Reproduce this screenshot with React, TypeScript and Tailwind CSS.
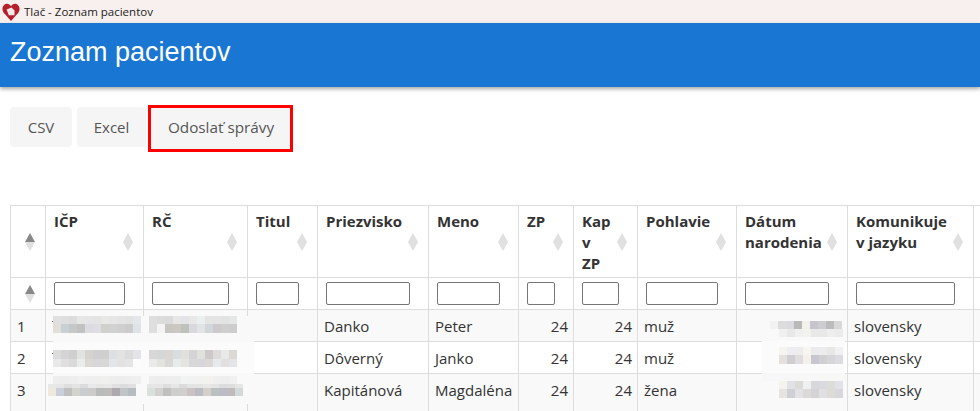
const columns = [
  { title: "", width: 35, input: 0 },
  { title: "IČP", width: 98, input: 71 },
  { title: "RČ", width: 104, input: 77 },
  { title: "Titul", width: 70, input: 43 },
  { title: "Priezvisko", width: 111, input: 84 },
  { title: "Meno", width: 90, input: 63 },
  { title: "ZP", width: 55, input: 28 },
  { title: "Kap v ZP", width: 64, input: 37 },
  { title: "Pohlavie", width: 99, input: 72 },
  { title: "Dátum narodenia", width: 111, input: 84 },
  { title: "Komunikuje v jazyku", width: 126, input: 99 },
  { title: "", width: 60, input: 0 },
];

const rows = [
  { no: 1, surname: "Danko", name: "Peter", zp: 24, kap: 24, sex: "muž", lang: "slovensky" },
  { no: 2, surname: "Dôverný", name: "Janko", zp: 24, kap: 24, sex: "muž", lang: "slovensky" },
  { no: 3, surname: "Kapitánová", name: "Magdaléna", zp: 24, kap: 24, sex: "žena", lang: "slovensky" },
];

// pixelated cover over personal data: x, y in table coordinates (table starts at 10,205)
const mosaic = [
  { x: 53, y: 316, h: 8, c: ["e0e0e0", "dedede", "dcdcdc", "e6e6e6", "e5e5e7", "e4e4e4", "e8e8e6", "e6e6e6", "e4e4e4", "e2e2e2", "e5e6ea"] },
  { x: 53, y: 324, h: 9, c: ["e2dfd8", "c8d0d4", "c6c8c8", "bfc2c0", "dcdce0", "dedee2", "d2d0cc", "d0d2d2", "cfcfcf", "cccccc", "dfe3e7"] },
  { x: 149, y: 316, h: 8, c: ["dedede", "dcdcdc", "dbdbdb", "e6e6e6", "e4e4e8", "e8e8e8", "ecefef", "e4e4e4", "e4e4e4", "e2e2e2", "e4e6e8"] },
  { x: 149, y: 324, h: 9, c: ["dedede", "f4f4f4", "c8c6c2", "cbc8c4", "bfc2bc", "d8d8de", "e2e3e5", "d2d6d8", "cccaca", "cfcfcf", "cdcdcd"] },
  { x: 53, y: 350, h: 9, c: ["dcdcdc", "d4d4d4", "cfcfcf", "e0e3e0", "d6d2d0", "d0cece", "cfcfcf", "dce0e2", "e2e2e2", "dcdcdc", "e2e4ea"] },
  { x: 53, y: 359, h: 8, c: ["e8e8e8", "e0dede", "dadada", "e8ecea", "dcd8d6", "d8d6d6", "d8d8d8", "e2e6ea", "e4e2e0", "e4e4e4", "fcfcfd"] },
  { x: 149, y: 350, h: 9, c: ["d8d8d8", "d4d6d8", "dad6d4", "d8dee0", "e2e0dc", "d4d4d4", "e0e0dc", "cec8ca", "dedcda", "e8eaea", "dcd8d6"] },
  { x: 149, y: 359, h: 8, c: ["eaeaea", "e2e2de", "dad8d6", "e6ecec", "e6e4e0", "d8d8d8", "d6d6dc", "dcd8d4", "e6eaee", "e2e0de", "e2e4e8"] },
  { x: 53, y: 376, h: 8, c: ["eeeeee", "ededed", "eeeeee", "f0f0f0", "efefef", "f0efef", "f0f0ee", "eeeeee", "ededed", "eeeeee", "efefef"] },
  { x: 149, y: 376, h: 8, c: ["eeeeee", "ededed", "eeeeee", "eeeeee", "f2f4f4", "f2f2f2", "f2f2f0", "f4f2f0", "efefef", "eeeeee", "f0f0f0"] },
  { x: 48, y: 384, h: 4, c: ["e8e8e8", "e6e6e6", "dedede", "e4e4e4", "dcdcdc", "e8e8ea", "e6e6e6", "e8e8e8", "e0e0e0", "dcdcdc", "e0e0e0"] },
  { x: 147, y: 384, h: 4, c: ["e6e6e6", "e6e6e6", "dedede", "e6e6e6", "dcdcdc", "e4e4e4", "e4e4e4", "e8e8e6", "e4e4e4", "dcdcdc", "dedede", "e6e6e6"] },
  { x: 48, y: 388, h: 8, c: ["eee9dc", "c9d0da", "c0bfbf", "d2d2ce", "c8ced0", "cfcbc8", "b8babc", "bebcb8", "b0a8b0", "c0c6c8", "b8bcc0"] },
  { x: 147, y: 388, h: 8, c: ["dce0dc", "d4d2d0", "c0c0bc", "cececc", "cfcfcd", "c8c4c4", "bcbcc4", "d2d0c8", "bcc0c0", "bcbcc4", "c0bcbc", "d4d8d8"] },
  { x: 770, y: 321, h: 8, c: ["f2f2f2", "dcdcdc", "dbdbdf", "b9b9b9", "f2f1ea", "c6c4cc", "cdccd0", "bcbcbc", "d8d8d8"] },
  { x: 779, y: 329, h: 8, c: ["f0f0f0", "e8e8e8", "f0f0f0", "f2f2ee", "e8e8e8", "e8e8e6", "eeeeee", "ebebeb"] },
  { x: 779, y: 347, h: 8, c: ["f6f4f0", "eeeef2", "ededf0", "f6f5f0", "ebebee", "ececec", "e8e8e6", "f1f1f4"] },
  { x: 779, y: 355, h: 9, c: ["e4e0de", "cfcfd2", "dfdde0", "f4f1ea", "c8c6d0", "d0d0d2", "d6d6d8", "dcdce0"] },
  { x: 779, y: 381, h: 8, c: ["f4f3f0", "e0e2e6", "dddbd8", "eef0f2", "d8d8da", "d8dade", "dcdcd8", "e0e2e6"] },
  { x: 779, y: 389, h: 9, c: ["e6e4e0", "cfd0d6", "e2e2e4", "dcdad8", "d4d4d6", "e0e0e2", "dcdbd6", "d8d8dc"] },
];

function SortIcon({ active }: { active?: boolean }) {
  return (
    <svg width="10" height="18" viewBox="0 0 10 18" className="absolute top-1/2 right-[10px] -translate-y-1/2">
      <path d="M5 0L10 9H0Z" fill={active ? "#888888" : "#e0e0e0"} />
      <path d="M5 18L10 9H0Z" fill="#e0e0e0" />
    </svg>
  );
}

function Mosaic() {
  return (
    <svg width="980" height="206" viewBox="0 205 980 206" className="absolute top-0 left-[-10px] pointer-events-none">
      <rect x="53" y="316" width="201" height="88" fill="#f9f9f9" />
      <rect x="53" y="342" width="201" height="31" fill="#fbfbfb" />
      <rect x="762" y="341" width="83" height="32" fill="#fbfbfb" />
      <rect x="762" y="373" width="83" height="8" fill="#f7f7f7" />
      <rect x="52" y="321" width="1" height="1" fill="#8a5a30" />
      <rect x="52" y="353" width="1" height="1" fill="#8a5a30" />
      {mosaic.map((r) =>
        r.c.map((color, i) => (
          <rect key={`${r.x}-${r.y}-${i}`} x={r.x + i * 8} y={r.y} width="8" height={r.h} fill={`#${color}`} />
        ))
      )}
    </svg>
  );
}

export default function App() {
  const cell = "border border-[#dddddd] pl-[6px] pr-[5px] pb-0 text-[15px] text-[#333333] font-normal";

  return (
    <div className="w-[980px] h-[411px] overflow-hidden bg-white font-['Open_Sans',sans-serif]">
      {/* window title */}
      <div className="h-[23px] bg-[#f8f0ee] flex items-center gap-[4px] pl-[2px]">
        <svg width="18" height="18" viewBox="0 0 17 17">
          <path d="M8.5 17L1.4 9C-0.8 5.6 1 0.6 4.6 0.6C6.4 0.6 7.7 1.6 8.5 3C9.3 1.6 10.6 0.6 12.4 0.6C16 0.6 17.8 5.6 15.6 9Z" fill="#b3202c" />
          <path d="M4.4 6.2L9 4.2L11.8 7V11.6H6.4Z" fill="#f6e9e6" />
        </svg>
        <span className="text-[11.5px] leading-none text-[#222222]">Tlač - Zoznam pacientov</span>
      </div>

      {/* blue header */}
      <header className="h-[64px] bg-[#1976d2] shadow-[0_2px_4px_rgba(0,0,0,0.35)] flex items-center pl-[10px] pb-[6px]">
        <h1 className="font-['Liberation_Sans',sans-serif] text-[27px] leading-none text-white">Zoznam pacientov</h1>
      </header>

      {/* export buttons */}
      <div className="flex items-start gap-[5px] pl-[10px] pt-[20px]">
        <button className="h-[40px] w-[62px] rounded-[4px] bg-[#f5f5f5] text-[15px] text-[#555555]">CSV</button>
        <button className="h-[40px] w-[69px] rounded-[4px] bg-[#f5f5f5] text-[15px] text-[#555555]">Excel</button>
        <button className="relative h-[42px] w-[140px] pb-[2px] -mb-[2px] bg-[#f5f5f5] text-[15.3px] text-[#555555]">
          Odoslať správy
          <span className="absolute -left-[3px] -top-[2px] w-[145px] h-[47px] border-[3px] border-[#ff0000]" />
        </button>
      </div>

      {/* patients table */}
      <div className="relative ml-[10px] mt-[58px]">
        <table className="table-fixed border-collapse w-[1023px]">
          <colgroup>
            {columns.map((col, i) => (
              <col key={i} style={{ width: col.width }} />
            ))}
          </colgroup>
          <thead>
            <tr className="h-[72px]">
              {columns.map((col, i) => (
                <th key={i} className={`relative border border-[#dddddd] pl-[8px] ${i === 7 ? "pr-[26px]" : "pr-[24px]"} pt-[5px] align-top text-left text-[15px] leading-[21px] font-bold text-[#333333]`}>
                  {i === 7 ? (
                    <>
                      Kap
                      <br />v
                      <br />
                      ZP
                    </>
                  ) : (
                    col.title
                  )}
                  {i < 11 && (col.title || i === 0) ? <SortIcon active={i === 0} /> : null}
                </th>
              ))}
            </tr>
            <tr className="h-[32px]">
              {columns.map((col, i) => (
                <th key={i} className="relative border border-[#dddddd] pl-[8px] p-0 text-left font-normal">
                  {col.input > 0 && (
                    <input className="block h-[23px] border border-[#767676] rounded-[2px] bg-white" style={{ width: col.input }} />
                  )}
                  {i === 0 && <SortIcon active />}
                </th>
              ))}
            </tr>
          </thead>
          <tbody>
            {rows.map((row, i) => {
              const text = i === 2 ? `${cell} pt-[5px]` : `${cell} pt-[1px]`;
              return (
                <tr key={row.no} className={`${i === 2 ? "h-[40px] align-top" : "h-[32px]"} ${i === 1 ? "bg-white" : "bg-[#f9f9f9]"}`}>
                  <td className={text}>{row.no}</td>
                  <td className={cell}></td>
                  <td className={cell}></td>
                  <td className={cell}></td>
                  <td className={text}>{row.surname}</td>
                  <td className={text}>{row.name}</td>
                  <td className={`${text} text-right`}>{row.zp}</td>
                  <td className={`${text} text-right`}>{row.kap}</td>
                  <td className={text}>{row.sex}</td>
                  <td className={cell}></td>
                  <td className={text}>{row.lang}</td>
                  <td className={cell}></td>
                </tr>
              );
            })}
          </tbody>
        </table>
        <Mosaic />
      </div>
    </div>
  );
}
